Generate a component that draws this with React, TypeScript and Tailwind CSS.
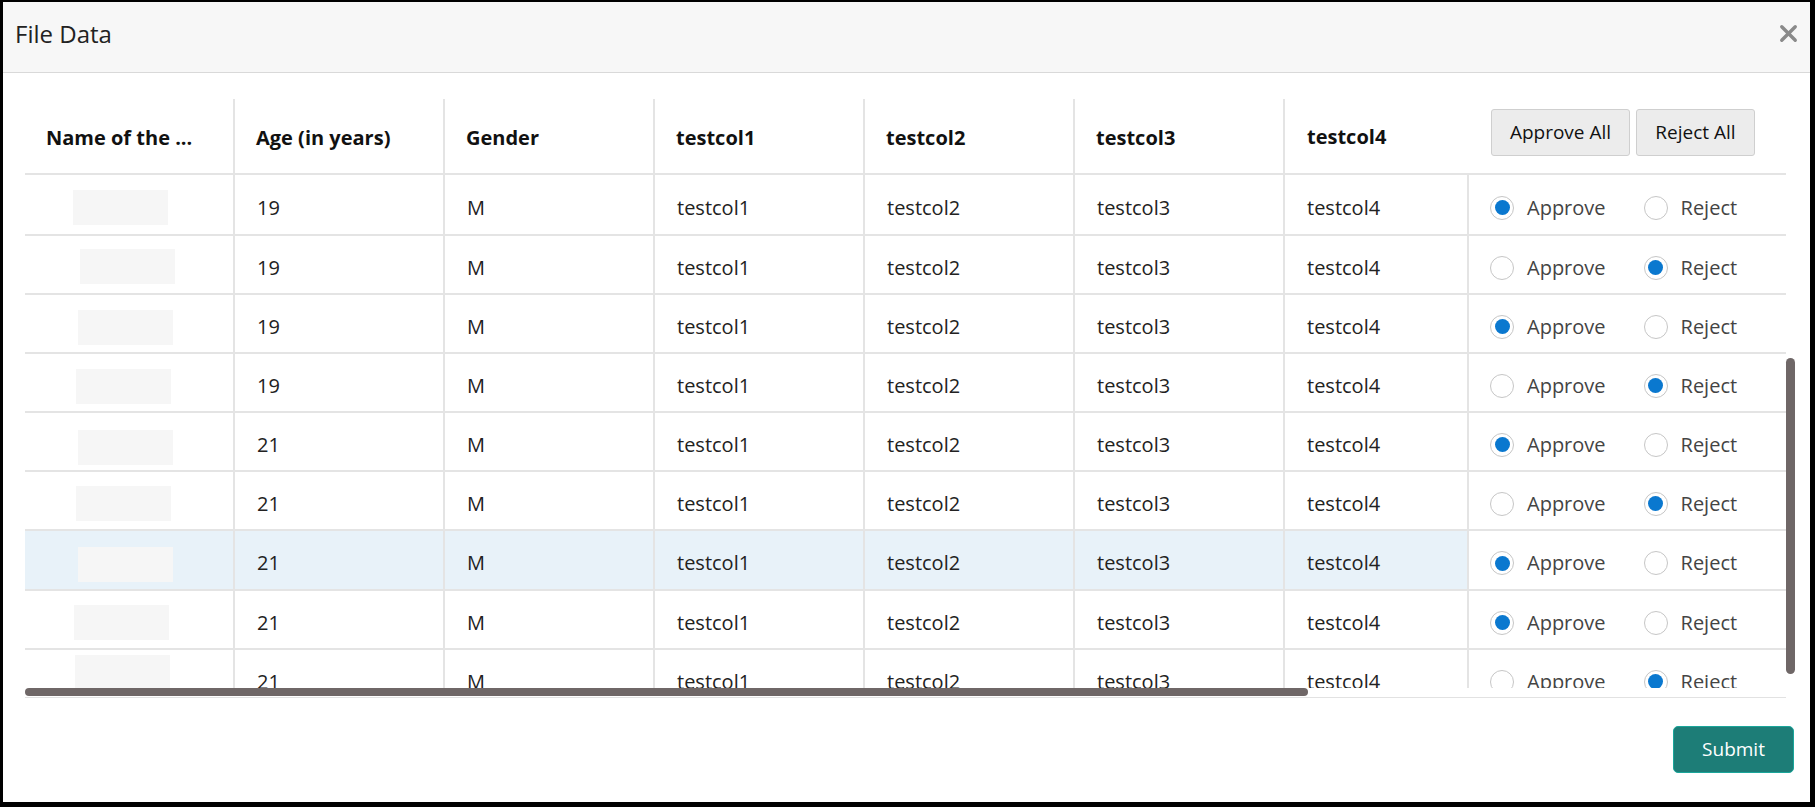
import { X } from "lucide-react";

type Choice = "approve" | "reject";

interface Row {
  age: string;
  choice: Choice;
  ph: string;
  h: string;
  active?: boolean;
}

const rows: Row[] = [
  { age: "19", choice: "approve", ph: "ml-[48px] mt-[15px]", h: "h-[61px]" },
  { age: "19", choice: "reject", ph: "ml-[55px] mt-[13px]", h: "h-[59px]" },
  { age: "19", choice: "approve", ph: "ml-[53px] mt-[15px]", h: "h-[59px]" },
  { age: "19", choice: "reject", ph: "ml-[51px] mt-[15px]", h: "h-[59px]" },
  { age: "21", choice: "approve", ph: "ml-[53px] mt-[17px]", h: "h-[59px]" },
  { age: "21", choice: "reject", ph: "ml-[51px] mt-[14px]", h: "h-[59px]" },
  { age: "21", choice: "approve", ph: "ml-[53px] mt-[16px]", h: "h-[60px]", active: true },
  { age: "21", choice: "approve", ph: "ml-[49px] mt-[14px]", h: "h-[59px]" },
  { age: "21", choice: "reject", ph: "ml-[50px] mt-[5px]", h: "h-[59px]" },
];

const headers = ["Name of the ...", "Age (in years)", "Gender", "testcol1", "testcol2", "testcol3"];

function Radio({ checked, label }: { checked: boolean; label: string }) {
  return (
    <label className="flex items-center gap-[13px] text-[20px] text-[#444]">
      <span className="w-[24px] h-[24px] rounded-full border border-[#c6c6c6] bg-white flex items-center justify-center">
        {checked && <span className="w-[15px] h-[15px] rounded-full bg-[#0a78cf]" />}
      </span>
      {label}
    </label>
  );
}

export default function App() {
  return (
    <div className="w-[1815px] h-[807px] bg-black pt-[2px] pl-[3px] pr-[5px] pb-[5px] font-['Segoe_UI','Open_Sans',sans-serif]">
      <div className="w-full h-full bg-white flex flex-col">
        {/* title bar */}
        <div className="h-[71px] shrink-0 bg-[#f7f7f7] border-b border-[#d9d9d9] flex items-center justify-between pl-[12px] pr-[8px] pb-[7px]">
          <span className="text-[24px] text-[#222]">File Data</span>
          <button className="text-[#8a8a8a]">
            <X size={27} strokeWidth={3} />
          </button>
        </div>

        {/* table */}
        <div className="ml-[22px] mt-[25px] w-[1771px]">
          <div className="w-[1761px] h-[77px] flex border-b-2 border-[#e4e4e4]">
            {headers.map((h) => (
              <div
                key={h}
                className="w-[210px] shrink-0 border-r-2 border-[#e4e4e4] pl-[21px] pt-[3px] flex items-center text-[20px] font-bold text-[#111] mt-[1px]"
              >
                {h}
              </div>
            ))}
            <div className="w-[185px] shrink-0 pl-[22px] pt-[3px] flex items-center text-[20px] font-bold text-[#111]">testcol4</div>
            <div className="flex-1 flex items-start gap-[6px] pl-[21px] pt-[11px]">
              <button className="w-[139px] h-[47px] bg-[#ececec] border border-[#cfcfcf] rounded-[3px] text-[19px] text-[#111]">
                Approve All
              </button>
              <button className="w-[119px] h-[47px] bg-[#ececec] border border-[#cfcfcf] rounded-[3px] text-[19px] text-[#111]">
                Reject All
              </button>
            </div>
          </div>

          <div className="flex">
            <div className="w-[1761px] h-[513px] overflow-hidden">
              {rows.map((r, i) => {
                const bg = r.active ? "bg-[#e8f2f9]" : "bg-white";
                const cell = `w-[210px] shrink-0 border-r-2 border-[#e4e4e4] pl-[22px] pt-[6px] flex items-center ${bg}`;
                return (
                  <div key={i} className={`${r.h} flex border-b-2 border-[#e4e4e4] text-[20px] text-[#222]`}>
                    <div className={`w-[210px] shrink-0 border-r-2 border-[#e4e4e4] ${bg}`}>
                      <div className={`w-[95px] h-[35px] bg-[#f6f6f6] ${r.ph}`} />
                    </div>
                    <div className={cell}>{r.age}</div>
                    <div className={cell}>M</div>
                    <div className={cell}>testcol1</div>
                    <div className={cell}>testcol2</div>
                    <div className={cell}>testcol3</div>
                    <div className={`w-[184px] shrink-0 border-r-2 border-[#e4e4e4] pl-[22px] pt-[6px] flex items-center ${bg}`}>testcol4</div>
                    <div className="flex-1 flex items-center pl-[21px] pt-[6px] gap-[38px] bg-white">
                      <Radio checked={r.choice === "approve"} label="Approve" />
                      <Radio checked={r.choice === "reject"} label="Reject" />
                    </div>
                  </div>
                );
              })}
            </div>
            <div className="w-[10px] pt-[183px]">
              <div className="w-[9px] h-[316px] rounded-full bg-[#6f6767]" />
            </div>
          </div>

          <div className="w-[1761px] h-[9px]">
            <div className="w-[1283px] h-[8px] rounded-full bg-[#6f6767]" />
          </div>
          <div className="w-[1761px] border-b border-[#e2e2e2]" />
        </div>

        {/* footer */}
        <div className="flex justify-end pr-[16px] mt-[28px]">
          <button className="w-[121px] h-[47px] bg-[#1d7d77] border border-[#1aa69b] rounded-[5px] text-white text-[19px]">
            Submit
          </button>
        </div>
      </div>
    </div>
  );
}
